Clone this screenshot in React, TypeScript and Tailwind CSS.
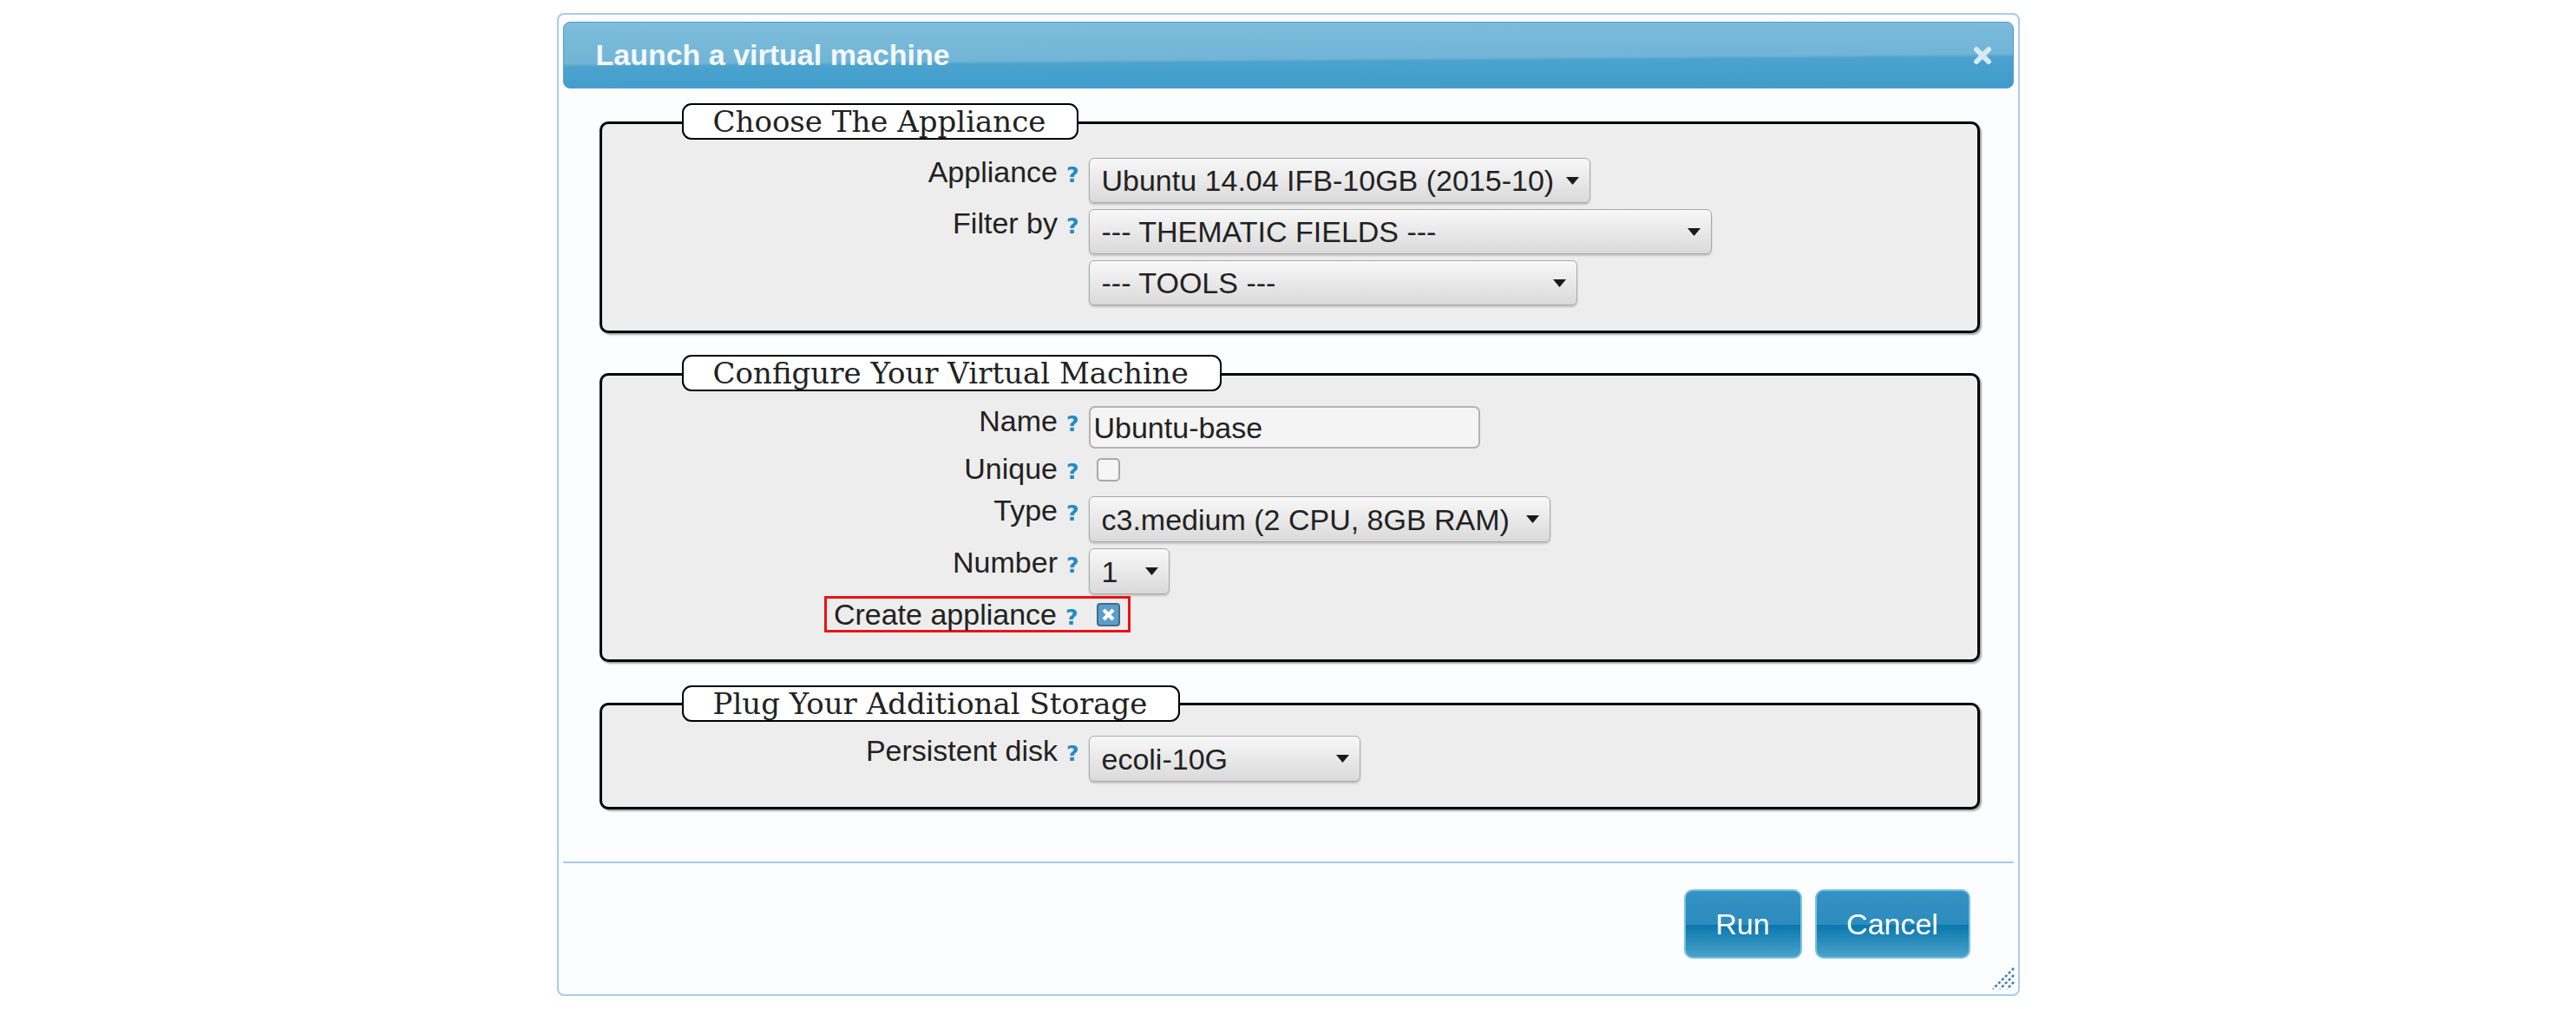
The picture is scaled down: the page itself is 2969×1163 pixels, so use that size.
import React from "react";

function Help() {
  return (
    <span className="ml-[10px] font-['DejaVu_Sans',sans-serif] text-[25px] font-bold leading-none text-[#218bc3]">?</span>
  );
}

function Label({ text }: { text: string }) {
  return (
    <div className="flex w-[561px] shrink-0 items-baseline justify-end pr-[11px] text-[34px] leading-[39px] text-[#222]">
      <span>{text}</span>
      <Help />
    </div>
  );
}

function Arrow() {
  return (
    <svg width="15" height="9" viewBox="0 0 15 9" className="shrink-0">
      <path d="M0 0h15L7.5 9z" fill="#1a1a1a" />
    </svg>
  );
}

function Select({ value, className }: { value: string; className: string }) {
  return (
    <div
      className={`flex items-center justify-between rounded-[6px] border border-[#a8a8a8] bg-gradient-to-b from-[#f8f8f8] to-[#dadada] pl-[14px] pr-[12px] text-[34px] text-[#222] shadow-[0_2px_2px_rgba(0,0,0,0.18)] ${className}`}
    >
      <span className="whitespace-nowrap leading-none">{value}</span>
      <Arrow />
    </div>
  );
}

function Fieldset({
  legend,
  legendClass,
  className,
  children,
}: {
  legend: string;
  legendClass: string;
  className: string;
  children: React.ReactNode;
}) {
  return (
    <div
      className={`rounded-[10px] border-[3px] border-black bg-[#ededed] shadow-[2px_2px_2px_rgba(0,0,0,0.35)] ${className}`}
    >
      <div
        className={`ml-[92px] w-fit rounded-[11px] border-2 border-black bg-white pl-[34px] pr-[36px] font-['DejaVu_Serif',serif] text-[34px] leading-[38px] text-[#222] ${legendClass}`}
      >
        {legend}
      </div>
      {children}
    </div>
  );
}

function CheckedBox() {
  return (
    <div className="flex h-[27px] w-[27px] items-center justify-center rounded-[4px] border-2 border-[#3f6d8c] bg-[#5c9eca]">
      <svg width="17" height="17" viewBox="0 0 17 17">
        <path d="M3 3L14 14M14 3L3 14" stroke="#ffffff" strokeWidth="4" />
      </svg>
    </div>
  );
}

export default function App() {
  return (
    <div className="min-h-[1163px] bg-white pt-[15px] font-['Liberation_Sans',Arial,sans-serif]">
      <div className="relative mx-auto h-[1133px] w-[1686px] rounded-[8px] border-2 border-[#a9cce4] bg-[#fbfdfe] px-[5px] pt-[8px]">
        {/* title bar */}
        <div className="flex h-[77px] items-center justify-between rounded-[8px] border border-[#4b9fd0] bg-[linear-gradient(179.6deg,#7ebedc_0%,#71b4d5_55%,#4ba3ce_59%,#3f9bcb_100%)] pl-[37px] pr-[24px]">
          <span className="text-[34px] font-bold text-[#f2f8fc]">Launch a virtual machine</span>
          <svg width="22" height="22" viewBox="0 0 22 22">
            <path d="M4 4L18 18M18 4L4 18" stroke="#d6eaf6" strokeWidth="6" strokeLinecap="round" />
          </svg>
        </div>

        <div className="ml-[42px] mr-[39px]">
          <Fieldset legend="Choose The Appliance" legendClass="-mt-[24px]" className="mt-[38px]">
            <div className="flex flex-col gap-[4px] pb-[29px] pt-[18px]">
              <div className="flex items-start">
                <Label text="Appliance" />
                <Select value="Ubuntu 14.04 IFB-10GB (2015-10)" className="mt-[3px] h-[52px] w-[578px]" />
              </div>
              <div className="flex items-start">
                <Label text="Filter by" />
                <Select value="--- THEMATIC FIELDS ---" className="mt-[3px] h-[52px] w-[718px]" />
              </div>
              <div className="flex items-start">
                <div className="w-[561px] shrink-0" />
                <Select value="--- TOOLS ---" className="mt-[3px] h-[52px] w-[563px]" />
              </div>
            </div>
          </Fieldset>

          <Fieldset legend="Configure Your Virtual Machine" legendClass="-mt-[24px]" className="mt-[46px]">
            <div className="flex flex-col pb-[31px] pt-[15px]">
              <div className="flex items-start">
                <Label text="Name" />
                <div className="mt-[2px] flex h-[49px] w-[451px] items-center rounded-[7px] border-2 border-[#b3b3b3] bg-[#f4f4f4] pl-[4px] text-[34px] leading-none text-[#222]">
                  Ubuntu-base
                </div>
              </div>
              <div className="mt-[4px] flex items-start">
                <Label text="Unique" />
                <div className="ml-[9px] mt-[7px] h-[27px] w-[27px] rounded-[5px] border-2 border-[#a9a9a9] bg-[#f5f5f5]" />
              </div>
              <div className="mt-[9px] flex items-start">
                <Label text="Type" />
                <Select value="c3.medium (2 CPU, 8GB RAM)" className="mt-[3px] h-[53px] w-[532px]" />
              </div>
              <div className="mt-[4px] flex items-start">
                <Label text="Number" />
                <Select value="1" className="mt-[3px] h-[53px] w-[93px]" />
              </div>
              <div className="mt-[2px] flex w-[609px] justify-end">
                <div className="flex h-[42px] items-center border-[3px] border-[#ee1111] pl-[8px] pr-[9px]">
                  <div className="flex items-baseline text-[34px] leading-[36px] text-[#222]">
                    <span>Create appliance</span>
                    <Help />
                  </div>
                  <div className="ml-[21px]">
                    <CheckedBox />
                  </div>
                </div>
              </div>
            </div>
          </Fieldset>

          <Fieldset legend="Plug Your Additional Storage" legendClass="-mt-[23px]" className="mt-[47px]">
            <div className="flex flex-col pb-[29px] pt-[14px]">
              <div className="flex items-start">
                <Label text="Persistent disk" />
                <Select value="ecoli-10G" className="mt-[2px] h-[53px] w-[313px]" />
              </div>
            </div>
          </Fieldset>
        </div>

        <div className="mt-[60px] h-[2px] bg-[#a9cbe3]" />

        <div className="mt-[30px] flex justify-end gap-[15px] pr-[50px]">
          <button className="h-[80px] w-[136px] rounded-[10px] border-2 border-[#79c3e6] bg-[linear-gradient(to_bottom,#3592c2_0%,#2c8cbd_51%,#0b77ad_52%,#4aa2c9_100%)] text-[34px] text-white">
            Run
          </button>
          <button className="h-[80px] w-[179px] rounded-[10px] border-2 border-[#79c3e6] bg-[linear-gradient(to_bottom,#3592c2_0%,#2c8cbd_51%,#0b77ad_52%,#4aa2c9_100%)] text-[34px] text-white">
            Cancel
          </button>
        </div>

        {/* resize grip */}
        <svg className="absolute bottom-[5px] right-[4px]" width="28" height="28" viewBox="0 0 28 28">
          <path
            d="M27 3L3 27M27 11L11 27M27 19L19 27"
            stroke="#3f7eab"
            strokeWidth="2.5"
            strokeDasharray="3 2.5"
          />
        </svg>
      </div>
    </div>
  );
}
